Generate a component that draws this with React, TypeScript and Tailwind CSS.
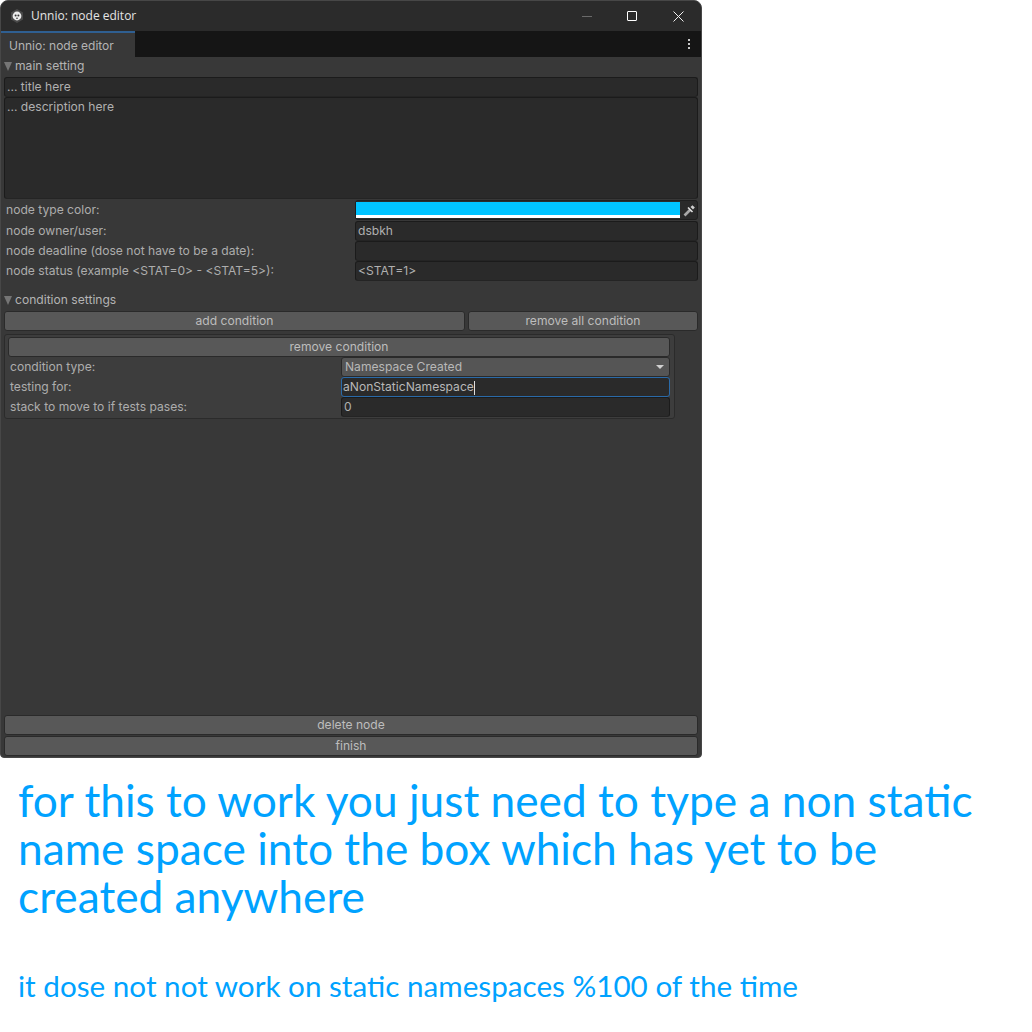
const FONT_UI = 'font-["Inter","Liberation_Sans",sans-serif]'

function SectionHeader({ label }: { label: string }) {
  return (
    <div className="flex h-[20px] items-center pb-[1px]">
      <span className="h-0 w-0 border-x-[4px] border-t-[9px] border-x-transparent border-t-[#757575]" />
      <span className="ml-[3px] text-[12.1px] text-[#b4b4b4]">{label}</span>
    </div>
  )
}

function Field({ value, className = '', children }: { value?: string; className?: string; children?: React.ReactNode }) {
  return (
    <div className={`flex items-center rounded-[3px] border border-[#1b1b1b] border-b-[#242424] bg-[#2a2a2a] px-[2px] text-[12.1px] text-[#b0b0b0] ${className}`}>
      {value}
      {children}
    </div>
  )
}

function Btn({ label, className = '' }: { label: string; className?: string }) {
  return (
    <div className={`flex h-5 items-center justify-center rounded-[3px] border border-[#2a2a2a] bg-[#585858] text-[12.1px] text-[#bdbdbd] ${className}`}>
      {label}
    </div>
  )
}

function NodeRow({ label, children, className = '' }: { label: string; children: React.ReactNode; className?: string }) {
  return (
    <div className={`flex h-5 items-center ${className}`}>
      <span className="w-[351px] pl-[2px] text-[12.1px] text-[#adadad]">{label}</span>
      {children}
    </div>
  )
}

function ConditionRow({ label, children }: { label: string; children: React.ReactNode }) {
  return (
    <div className="flex h-5 items-center">
      <span className="w-[333px] pl-[2px] text-[12.1px] text-[#adadad]">{label}</span>
      {children}
    </div>
  )
}

export default function App() {
  return (
    <div className="min-h-[1032px] w-[1032px] bg-white">
      <div className={`flex h-[758px] w-[702px] flex-col overflow-hidden rounded-t-[8px] rounded-b-[4px] border border-[#474747] bg-[#383838] ${FONT_UI}`}>
        <div className="flex h-[30px] shrink-0 items-center bg-[#2b2b2b]">
          <svg className="ml-[9px] h-[14px] w-[14px]" viewBox="0 0 14 14">
            <path d="M7 0 13 3.5V10.5L7 14 1 10.5V3.5Z" fill="#4a4a4a" />
            <circle cx="7" cy="7" r="4.4" fill="#ececec" />
            <circle cx="5.6" cy="6.4" r="1" fill="#333" />
            <circle cx="8.4" cy="6.4" r="1" fill="#333" />
            <rect x="6.2" y="8.6" width="1.6" height="1.4" fill="#555" />
          </svg>
          <span className='ml-[7px] font-["Open_Sans",sans-serif] text-[12px] text-[#e4e4e4]'>Unnio: node editor</span>
          <div className="ml-auto flex items-center">
            <span className="h-px w-[10px] bg-[#6a6a6a]" />
            <span className="ml-[35px] h-[10px] w-[10px] rounded-[1px] border border-white" />
            <svg className="ml-[36px] mr-[17px] h-[11px] w-[11px]" viewBox="0 0 11 11" stroke="#f0f0f0" strokeWidth="1">
              <path d="M.5.5 10.5 10.5M10.5.5 .5 10.5" />
            </svg>
          </div>
        </div>

        <div className="flex h-[26px] shrink-0 items-stretch bg-[#151515]">
          <div className="flex w-[134px] items-center border-t-2 border-t-[#2f5f91] bg-[#383838] pl-[8px] pt-[1px] text-[12px] text-[#b4b4b4]">
            Unnio: node editor
          </div>
          <div className="ml-auto mr-[11px] flex flex-col justify-center gap-[2px]">
            <span className="h-[2px] w-[2px] bg-[#c8c8c8]" />
            <span className="h-[2px] w-[2px] bg-[#c8c8c8]" />
            <span className="h-[2px] w-[2px] bg-[#c8c8c8]" />
          </div>
        </div>

        <div className="flex min-h-0 flex-1 flex-col px-[3px] pb-[1px]">
          <SectionHeader label="main setting" />
          <Field value="... title here" className="h-5" />
          <Field value="... description here" className="h-[102px] !items-start" />

          <div className="mt-[1px] flex flex-col">
            <NodeRow label="node type color:">
              <div className="flex h-5 flex-1 items-center rounded-[3px] border border-[#1f1f1f] bg-[#2a2a2a]">
                <div className="flex h-[16px] w-[324px] flex-col">
                  <div className="h-[13px] bg-[#00c3ff]" />
                  <div className="h-[3px] bg-white" />
                </div>
                <svg className="ml-[3px] h-[13px] w-[13px]" viewBox="0 0 13 13">
                  <path d="M1.5 11.5 7.5 5.5" stroke="#a8a8a8" strokeWidth="2.6" />
                  <path d="M5 3.5 9.5 8" stroke="#e0e0e0" strokeWidth="1.6" />
                  <path d="M7.5 3 9.5 1.2 11.8 3.5 10 5.5Z" fill="#d0d0d0" />
                </svg>
              </div>
            </NodeRow>
            <NodeRow label="node owner/user:" className="mt-px">
              <Field value="dsbkh" className="h-5 flex-1" />
            </NodeRow>
            <NodeRow label="node deadline (dose not have to be a date):">
              <Field className="h-5 flex-1" />
            </NodeRow>
            <NodeRow label="node status (example <STAT=0> - <STAT=5>):">
              <Field value="<STAT=1>" className="h-5 flex-1" />
            </NodeRow>
          </div>

          <div className="mt-[10px]">
            <SectionHeader label="condition settings" />
          </div>
          <div className="flex gap-[3px]">
            <Btn label="add condition" className="w-[461px]" />
            <Btn label="remove all condition" className="w-[230px]" />
          </div>

          <div className="mt-[3px] flex w-[671px] flex-col rounded-[3px] border border-[#2b2b2b] bg-[#3d3d3d] pb-[1px] pl-[3px] pr-[4px] pt-[2px]">
            <Btn label="remove condition" />
            <ConditionRow label="condition type:">
              <div className="flex h-5 flex-1 items-center justify-between rounded-[3px] border border-[#2a2a2a] bg-[#555555] px-[3px] text-[12.1px] text-[#b8b8b8]">
                Namespace Created
                <span className="mr-[2px] h-0 w-0 border-x-[4px] border-t-[4px] border-x-transparent border-t-[#d0d0d0]" />
              </div>
            </ConditionRow>
            <ConditionRow label="testing for:">
              <Field className="h-5 flex-1 !border-[#2a6aa8] !px-[1px] pt-[1px] !text-[#b8b8b8]">
                aNonStaticNamespace
                <span className="h-[14px] w-px bg-[#e0e0e0]" />
              </Field>
            </ConditionRow>
            <ConditionRow label="stack to move to if tests pases:">
              <Field value="0" className="h-5 flex-1" />
            </ConditionRow>
          </div>

          <div className="mt-auto flex flex-col gap-px">
            <Btn label="delete node" />
            <Btn label="finish" />
          </div>
        </div>
      </div>

      <div className='pl-[18px] pt-[18px] font-["Lato",sans-serif] text-[#00a2ff]'>
        <p className="w-[990px] text-[44.25px] leading-[48px]">
          for this to work you just need to type a non static name space into the box which has yet to be created anywhere
        </p>
        <p className="mt-[46px] text-[29.65px] leading-[40px]">it dose not not work on static namespaces %100 of the time</p>
      </div>
    </div>
  )
}
